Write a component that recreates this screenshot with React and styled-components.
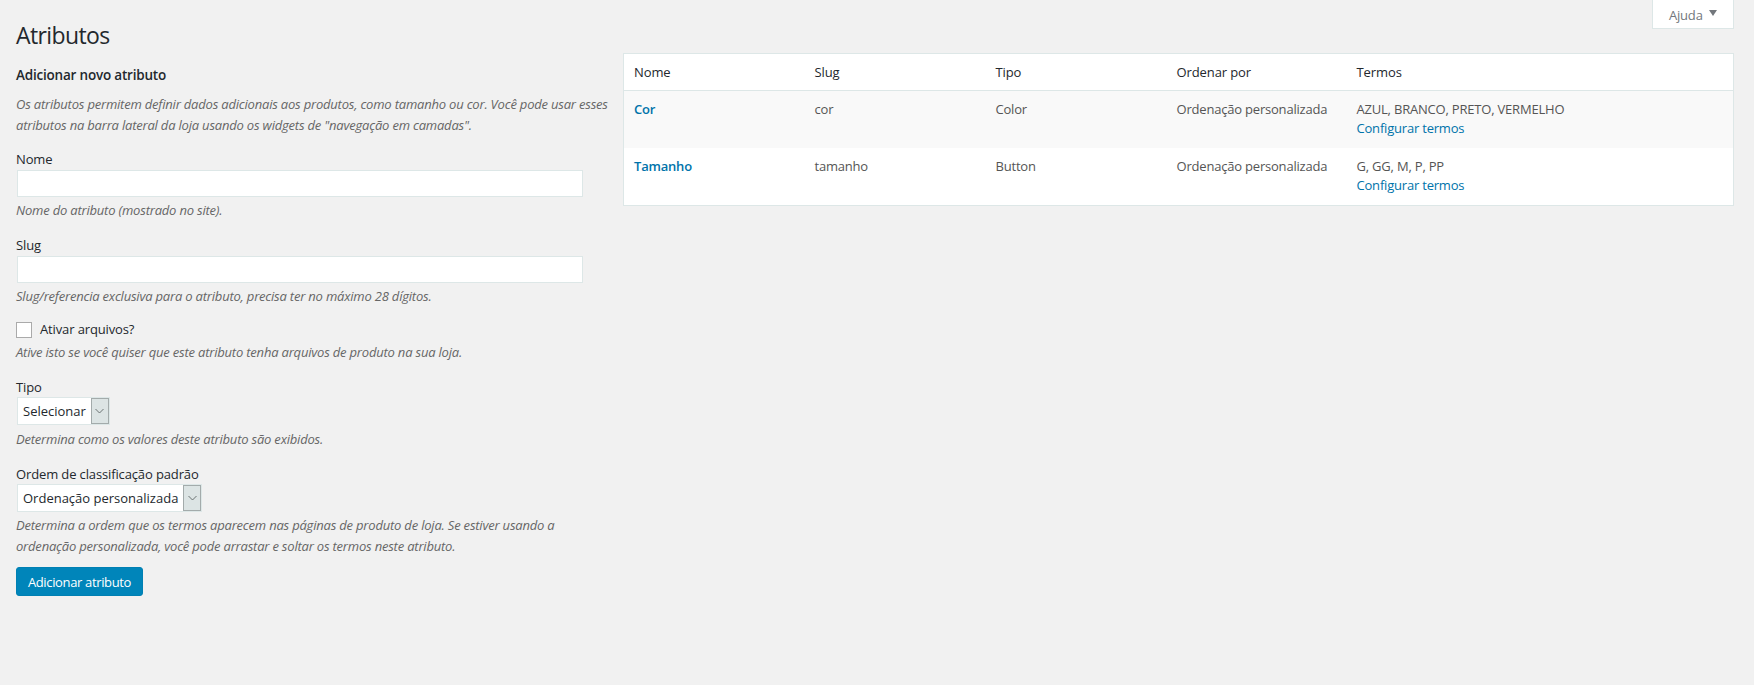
import React from 'react';
import styled, { createGlobalStyle } from 'styled-components';

const GlobalStyle = createGlobalStyle`
  html, body {
    margin: 0;
    padding: 0;
    background: #f1f1f1;
  }
  body {
    font-family: "Open Sans", "Noto Sans", "Liberation Sans", sans-serif;
    font-size: 13px;
    color: #444;
  }
  * {
    box-sizing: border-box;
  }
`;

const Page = styled.div`
  min-height: 685px;
  padding: 0 20px 0 16px;
  letter-spacing: -0.2px;
`;

const Header = styled.header`
  display: flex;
  justify-content: space-between;
  align-items: flex-start;
  height: 53px;
`;

const Title = styled.h1`
  margin: 0;
  padding-top: 19px;
  font-size: 23px;
  font-weight: 400;
  line-height: 32px;
  letter-spacing: -0.6px;
  color: #23282d;
`;

const HelpTab = styled.button`
  display: flex;
  align-items: center;
  gap: 6px;
  width: 82px;
  height: 29px;
  padding: 1px 0 0 16px;
  background: #fff;
  border: 1px solid #dde7e7;
  border-top: 0;
  color: #72777c;
  font: inherit;
  letter-spacing: inherit;
`;

const Caret = styled.span`
  width: 0;
  height: 0;
  border-left: 4.5px solid transparent;
  border-right: 4.5px solid transparent;
  border-top: 6px solid #72777c;
  margin-top: -3px;
`;

const Columns = styled.div`
  display: flex;
  align-items: flex-start;
  gap: 14px;
`;

const LeftColumn = styled.section`
  flex: 0 0 593px;
  padding-top: 13px;
`;

const RightColumn = styled.section`
  flex: 1;
`;

const FormTitle = styled.h2`
  margin: 0 0 10px;
  font-size: 13.5px;
  font-weight: 600;
  line-height: 18px;
  color: #23282d;
`;

const Description = styled.p`
  margin: ${(p) => p.$top || 0}px 0 0;
  font-size: 13px;
  font-style: italic;
  line-height: 21px;
  color: #666;
`;

const Field = styled.div`
  margin-top: ${(p) => p.$top ?? 13}px;
`;

const Label = styled.label`
  display: block;
  height: 20px;
  line-height: 20px;
  letter-spacing: -0.13px;
  color: #23282d;
`;

const TextInput = styled.input`
  display: block;
  width: 566px;
  height: 27px;
  margin: 1px 0 0 1px;
  padding: 0 8px;
  background: #fff;
  border: 1px solid #dde7e7;
  outline: 0;
`;

const CheckRow = styled.label`
  display: flex;
  align-items: center;
  gap: 8px;
  height: 21px;
  letter-spacing: -0.13px;
  color: #23282d;
`;

const CheckBox = styled.input`
  appearance: none;
  width: 16px;
  height: 16px;
  margin: 2px 0 0;
  background: #fff;
  border: 1px solid #aaa;
`;

const Select = styled.div`
  display: inline-flex;
  vertical-align: top;
  height: 28px;
  margin-left: 1px;
  background: #fff;
  border: 1px solid #dde7e7;
  color: #23282d;
`;

const SelectValue = styled.span`
  padding: 0 5px 0 5px;
  line-height: 27px;
  white-space: nowrap;
  letter-spacing: 0;
`;

const SelectArrow = styled.span`
  display: flex;
  align-items: center;
  justify-content: center;
  width: 18px;
  background: #dce4e4;
  border: 1px solid #a3abab;
`;

const SubmitButton = styled.button`
  display: block;
  width: 127px;
  height: 29px;
  margin-top: 10px;
  padding: 0;
  background: #0085ba;
  border: 1px solid #0080b3;
  border-radius: 3px;
  color: #fff;
  font: inherit;
  letter-spacing: -0.35px;
`;

const Table = styled.table`
  width: 100%;
  border-collapse: collapse;
  table-layout: fixed;
  background: #fff;
  border: 1px solid #dde7e7;
`;

const HeadCell = styled.th`
  width: ${(p) => (p.$width ? `${p.$width}px` : 'auto')};
  height: 37px;
  padding: 0 10px;
  border-bottom: 1px solid #dde7e7;
  font-weight: 400;
  text-align: left;
  letter-spacing: -0.1px;
  color: #23282d;
`;

const Row = styled.tr`
  background: ${(p) => (p.$alt ? '#f9f9f9' : '#fff')};
  &:last-child td {
    height: 58px;
  }
`;

const Cell = styled.td`
  height: 57px;
  padding: 9px 10px 8px;
  vertical-align: top;
  line-height: 19px;
  white-space: nowrap;
  color: #555;
`;

const NameLink = styled.a`
  font-weight: 600;
  color: #0073aa;
  text-decoration: none;
`;

const TermsLink = styled.a`
  display: block;
  color: #0073aa;
  text-decoration: none;
`;

const Chevron = () => (
  <svg width="9" height="6" viewBox="0 0 9 6" fill="none">
    <path d="M0.5 1 L4.5 5 L8.5 1" stroke="#5f6666" strokeWidth="0.9" />
  </svg>
);

const attributes = [
  { name: 'Cor', slug: 'cor', type: 'Color', terms: 'AZUL, BRANCO, PRETO, VERMELHO' },
  { name: 'Tamanho', slug: 'tamanho', type: 'Button', terms: 'G, GG, M, P, PP' },
];

const App = () => (
  <Page>
    <GlobalStyle />
    <Header>
      <Title>Atributos</Title>
      <HelpTab>
        Ajuda <Caret />
      </HelpTab>
    </Header>
    <Columns>
      <LeftColumn>
        <FormTitle>Adicionar novo atributo</FormTitle>
        <Description>
          Os atributos permitem definir dados adicionais aos produtos, como tamanho ou cor. Você
          pode usar esses atributos na barra lateral da loja usando os widgets de "navegação em
          camadas".
        </Description>
        <Field>
          <Label>Nome</Label>
          <TextInput type="text" />
          <Description $top={3}>Nome do atributo (mostrado no site).</Description>
        </Field>
        <Field $top={14}>
          <Label>Slug</Label>
          <TextInput type="text" />
          <Description $top={3}>
            Slug/referencia exclusiva para o atributo, precisa ter no máximo 28 dígitos.
          </Description>
        </Field>
        <Field $top={11}>
          <CheckRow>
            <CheckBox type="checkbox" />
            Ativar arquivos?
          </CheckRow>
          <Description $top={3}>
            Ative isto se você quiser que este atributo tenha arquivos de produto na sua loja.
          </Description>
        </Field>
        <Field $top={14}>
          <Label>Tipo</Label>
          <Select>
            <SelectValue>Selecionar</SelectValue>
            <SelectArrow>
              <Chevron />
            </SelectArrow>
          </Select>
          <Description $top={4}>Determina como os valores deste atributo são exibidos.</Description>
        </Field>
        <Field $top={14}>
          <Label>Ordem de classificação padrão</Label>
          <Select>
            <SelectValue>Ordenação personalizada</SelectValue>
            <SelectArrow>
              <Chevron />
            </SelectArrow>
          </Select>
          <Description $top={3}>
            Determina a ordem que os termos aparecem nas páginas de produto de loja. Se estiver
            usando a ordenação personalizada, você pode arrastar e soltar os termos neste atributo.
          </Description>
        </Field>
        <SubmitButton>Adicionar atributo</SubmitButton>
      </LeftColumn>
      <RightColumn>
        <Table>
          <thead>
            <tr>
              <HeadCell $width={181}>Nome</HeadCell>
              <HeadCell $width={181}>Slug</HeadCell>
              <HeadCell $width={181}>Tipo</HeadCell>
              <HeadCell $width={180}>Ordenar por</HeadCell>
              <HeadCell>Termos</HeadCell>
            </tr>
          </thead>
          <tbody>
            {attributes.map((attr, index) => (
              <Row key={attr.slug} $alt={index === 0}>
                <Cell>
                  <NameLink href="#">{attr.name}</NameLink>
                </Cell>
                <Cell>{attr.slug}</Cell>
                <Cell>{attr.type}</Cell>
                <Cell>Ordenação personalizada</Cell>
                <Cell>
                  {attr.terms}
                  <TermsLink href="#">Configurar termos</TermsLink>
                </Cell>
              </Row>
            ))}
          </tbody>
        </Table>
      </RightColumn>
    </Columns>
  </Page>
);

export default App;
